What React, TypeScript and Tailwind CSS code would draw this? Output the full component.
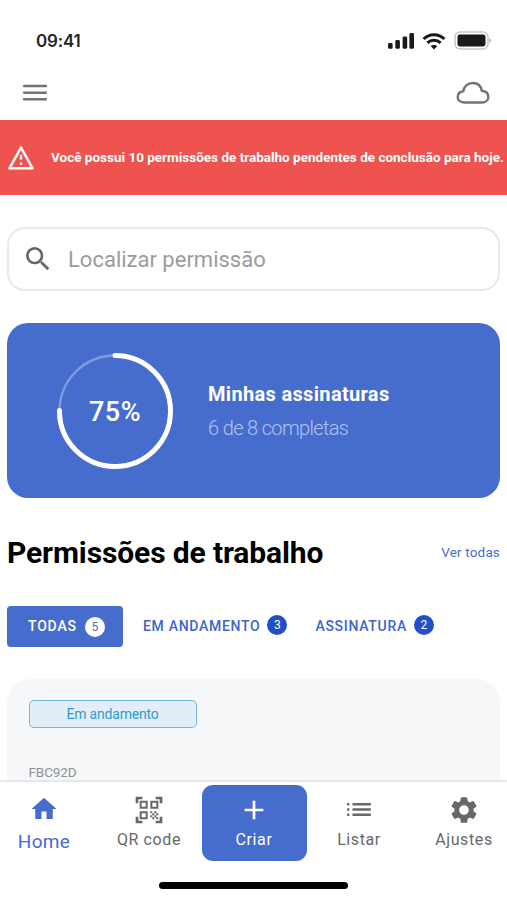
import type { ReactNode } from "react";
import { MdAdd, MdHome, MdQrCodeScanner, MdSearch, MdSettings } from "react-icons/md";

function StatusBar() {
  return (
    <div className="flex h-[66px] shrink-0 items-start justify-between pt-[30px] pr-[15px] pl-[36px]">
      <span className="font-['Inter'] text-[17px] leading-[22px] font-semibold tracking-[-0.2px] text-[#252525]">
        09:41
      </span>
      <div className="flex items-center gap-2 pt-px text-[#1a1a1a]">
        <svg className="h-[17px] w-[27px]" viewBox="0 0 27 17" fill="currentColor" aria-hidden>
          <rect x="1" y="11" width="4.6" height="5.8" rx="1.4" />
          <rect x="8.3" y="8" width="4.6" height="8.8" rx="1.4" />
          <rect x="15.6" y="4.5" width="4.6" height="12.3" rx="1.4" />
          <rect x="22.4" y="1" width="4.6" height="15.8" rx="1.4" />
        </svg>
        <svg className="h-[18px] w-6" viewBox="0 0 24 18" aria-hidden>
          <g fill="none" stroke="currentColor" strokeWidth="3">
            <path d="M1.6 7C7.4 1.3 16.6 1.3 22.4 7" />
            <path d="M5.4 10.9C9.1 7.4 14.9 7.4 18.6 10.9" />
          </g>
          <path d="M8.6 14.1C10.5 12.5 13.5 12.5 15.4 14.1L12 17.6Z" fill="currentColor" />
        </svg>
        <svg className="h-[19px] w-[38px]" viewBox="0 0 38 19" aria-hidden>
          <rect x="1" y="1" width="33" height="17" rx="5" fill="none" stroke="#c9c9c9" strokeWidth="1.6" />
          <rect x="3.5" y="3.5" width="28" height="12" rx="2.4" fill="currentColor" />
          <path d="M35.5 7.2C37.5 8 37.5 11 35.5 11.8Z" fill="#a8a8a8" />
        </svg>
      </div>
    </div>
  );
}

function Header() {
  return (
    <header className="flex h-[54px] shrink-0 items-center justify-between pr-[17px] pl-[23px]">
      <button type="button" aria-label="Menu">
        <svg className="h-[18px] w-6" viewBox="0 0 24 18" fill="#747474">
          <rect y="0.7" width="24" height="2.5" rx="0.8" />
          <rect y="7.4" width="24" height="2.5" rx="0.8" />
          <rect y="14.1" width="24" height="2.5" rx="0.8" />
        </svg>
      </button>
      <button type="button" aria-label="Nuvem">
        <svg className="h-6 w-[34px]" viewBox="0 0 34 24" fill="none" stroke="#747474" strokeWidth="2.4" strokeLinejoin="round">
          <path d="M9 21.5C4.5 21.5 1.7 19.2 1.7 15.9C1.7 12.7 4 10.6 7.4 10.2C7.6 5.4 11.5 2 16.8 2C21.6 2 25 4.8 25.8 9.8C29.8 10.3 32.3 12.6 32.3 15.9C32.3 19.2 29.6 21.5 26 21.5Z" />
        </svg>
      </button>
    </header>
  );
}

function AlertBanner() {
  return (
    <div className="flex h-[75px] shrink-0 items-center bg-[#ef5350] pl-2 text-white">
      <svg className="mr-[17px] h-6 w-[26px] shrink-0" viewBox="0 0 26 24" fill="none" stroke="currentColor" strokeWidth="2.4" aria-hidden>
        <path d="M13 1.6L24.6 22.3H1.4Z" strokeLinejoin="round" />
        <path d="M13 8.8V13.4M13 16.4V19" />
      </svg>
      <p className="font-['Roboto'] text-[13.5px] font-bold whitespace-nowrap">
        Você possui 10 permissões de trabalho pendentes de conclusão para hoje.
      </p>
    </div>
  );
}

function SearchField() {
  return (
    <div className="flex h-16 shrink-0 items-center rounded-[18px] border-2 border-[#e9e9e9] pl-[13px]">
      <MdSearch className="size-8 text-[#666666]" />
      <span className="ml-[14px] font-['Roboto'] text-[22px] text-[#9b9b9b]">Localizar permissão</span>
    </div>
  );
}

function ProgressRing({ percent }: { percent: number }) {
  const length = 2 * Math.PI * 55.5;
  return (
    <div className="grid size-[118px] place-items-center">
      <svg className="col-start-1 row-start-1 size-[118px] -rotate-90" viewBox="0 0 118 118" fill="none" aria-hidden>
        <circle cx="59" cy="59" r="55.5" stroke="#809be0" strokeWidth="2.4" />
        <circle
          cx="59"
          cy="59"
          r="55.5"
          stroke="white"
          strokeWidth="5"
          strokeLinecap="round"
          strokeDasharray={`${(length * percent) / 100} ${length}`}
        />
      </svg>
      <span className="col-start-1 row-start-1 pt-[3px] font-['Roboto'] text-[27px] font-medium tracking-[0.5px]">
        {percent}%
      </span>
    </div>
  );
}

function SignaturesCard() {
  return (
    <section className="mt-8 flex h-[175px] shrink-0 items-center rounded-[21px] bg-[#466dce] pl-[49px] text-white">
      <ProgressRing percent={75} />
      <div className="ml-[34px] font-['Roboto']">
        <h2 className="text-[20px] leading-[34px] font-bold tracking-[0.33px] whitespace-nowrap">
          Minhas assinaturas
        </h2>
        <p className="text-[20px] leading-[34px] font-light tracking-[-0.65px] whitespace-nowrap text-[#b0c1ed]">
          6 de 8 completas
        </p>
      </div>
    </section>
  );
}

function Tab({ label, count, active = false }: { label: string; count: number; active?: boolean }) {
  return (
    <button
      type="button"
      className={`flex h-[41px] items-center font-['Roboto'] text-[14px] font-medium whitespace-nowrap ${
        active
          ? "w-[116px] gap-2 rounded-[4px] bg-[#466dce] pl-[21px] tracking-[0.8px] text-white"
          : "gap-[7px] tracking-[0.7px] text-[#3d65cc]"
      }`}
    >
      {label}
      <span
        className={`flex size-5 items-center justify-center rounded-full text-[12px] font-normal tracking-normal ${
          active ? "bg-white text-[#466dce]" : "mb-[3px] bg-[#204fc8] text-white"
        }`}
      >
        {count}
      </span>
    </button>
  );
}

function PermitCard() {
  return (
    <article className="mt-8 h-[180px] shrink-0 rounded-t-[24px] bg-[#f6f7f9] px-[21.5px] pt-[21px] font-['Roboto']">
      <div className="flex h-[28px] w-[168px] items-center justify-center rounded-[5px] border border-[#6fb9e6] bg-[#e3edf7] text-[14px] tracking-[-0.2px] text-[#2f9ad8]">
        Em andamento
      </div>
      <p className="mt-[34px] text-[13.5px] leading-[20px] tracking-[-0.1px] text-[#8c9196]">FBC92D</p>
    </article>
  );
}

function NavItem({ label, icon }: { label: string; icon: ReactNode }) {
  return (
    <button type="button" className="flex w-[105px] flex-col items-center pt-3 text-[#686868]">
      {icon}
      <span className="mt-[3px] text-[16px] leading-[22px] tracking-[0.6px] whitespace-nowrap">{label}</span>
    </button>
  );
}

function BottomNav() {
  return (
    <nav className="flex h-[120px] shrink-0 flex-col items-center border-t-2 border-[#e7e7e8] bg-white font-['Roboto']">
      <div className="flex h-[84px] w-[527px] justify-center pl-px">
        <button type="button" className="flex w-[105px] flex-col items-center pt-3 text-[#466dce]">
          <MdHome className="size-[30px]" />
          <span className="mt-[6px] text-[19px] leading-[24px] tracking-[0.3px]">Home</span>
        </button>
        <NavItem label="QR code" icon={<MdQrCodeScanner className="size-8" />} />
        <button
          type="button"
          className="mt-[3px] flex h-[76px] w-[105px] flex-col items-center rounded-[11px] bg-[#466dce] pt-[9px] text-white"
        >
          <MdAdd className="size-8" />
          <span className="mt-[3px] text-[16px] leading-[22px] tracking-[0.6px]">Criar</span>
        </button>
        <NavItem
          label="Listar"
          icon={
            <svg className="size-8" viewBox="0 0 32 32" fill="currentColor" aria-hidden>
              <rect x="4" y="9" width="2.5" height="2.5" rx="0.8" />
              <rect x="4" y="14.3" width="2.5" height="2.5" rx="0.8" />
              <rect x="4" y="19.6" width="2.5" height="2.5" rx="0.8" />
              <rect x="9.3" y="9" width="18.7" height="2.5" rx="1" />
              <rect x="9.3" y="14.3" width="18.7" height="2.5" rx="1" />
              <rect x="9.3" y="19.6" width="18.7" height="2.5" rx="1" />
            </svg>
          }
        />
        <NavItem label="Ajustes" icon={<MdSettings className="size-8" />} />
      </div>
      <div className="mt-[16px] h-[7px] w-[189px] rounded-full bg-black" />
    </nav>
  );
}

export default function App() {
  return (
    <div className="flex h-[900px] w-[507px] flex-col overflow-hidden bg-white">
      <StatusBar />
      <Header />
      <AlertBanner />
      <main className="flex min-h-0 flex-1 flex-col overflow-hidden px-[7px] pt-8">
        <SearchField />
        <SignaturesCard />
        <div className="mt-[33px] flex h-[42px] shrink-0 items-center justify-between">
          <h1 className="font-['Roboto'] text-[30px] font-bold tracking-[-0.12px] whitespace-nowrap text-black">
            Permissões de trabalho
          </h1>
          <a href="#" className="font-['Roboto'] text-[13.5px] tracking-[0.15px] whitespace-nowrap text-[#466dce]">
            Ver todas
          </a>
        </div>
        <div className="mt-[33px] flex shrink-0 items-center">
          <Tab label="TODAS" count={5} active />
          <div className="ml-[20px] flex gap-7">
            <Tab label="EM ANDAMENTO" count={3} />
            <Tab label="ASSINATURA" count={2} />
          </div>
        </div>
        <PermitCard />
      </main>
      <BottomNav />
    </div>
  );
}
